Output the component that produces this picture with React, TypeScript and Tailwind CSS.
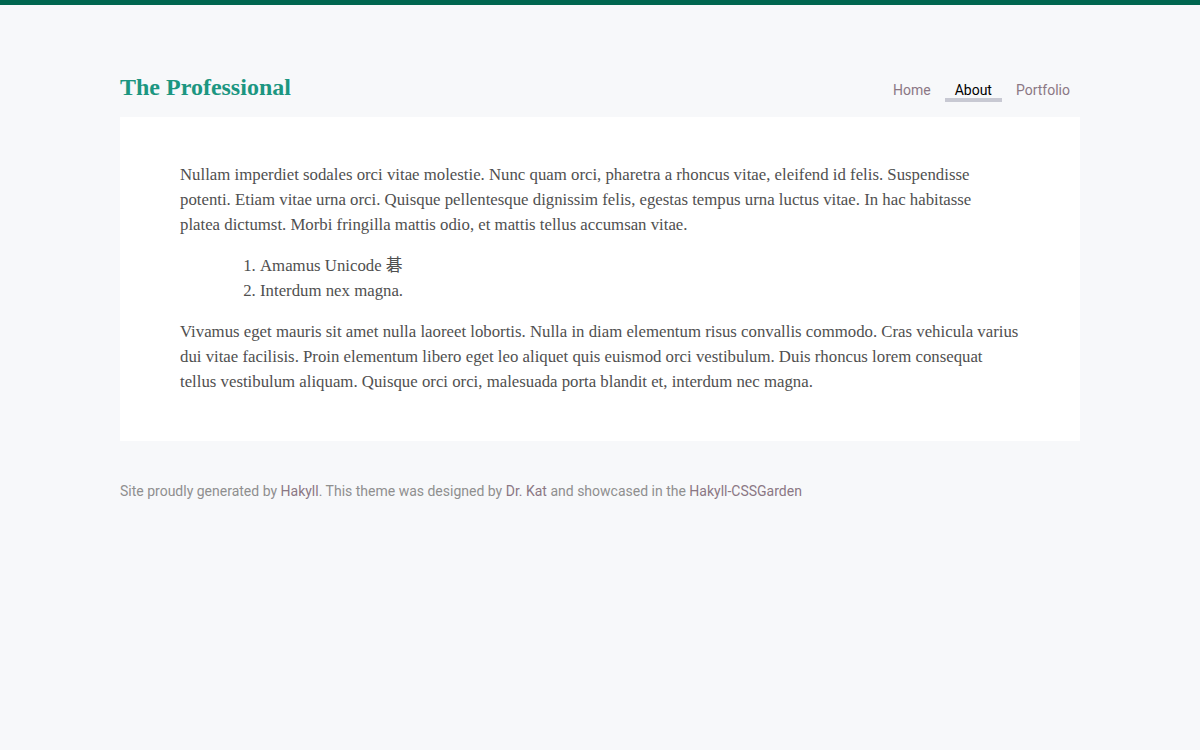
const serif = { fontFamily: '"Liberation Serif", "DejaVu Serif", "Noto Sans CJK SC", serif' };

const intro = [
  'Nullam imperdiet sodales orci vitae molestie. Nunc quam orci, pharetra a rhoncus vitae, eleifend id felis. Suspendisse',
  'potenti. Etiam vitae urna orci. Quisque pellentesque dignissim felis, egestas tempus urna luctus vitae. In hac habitasse',
  'platea dictumst. Morbi fringilla mattis odio, et mattis tellus accumsan vitae.',
];

const outro = [
  'Vivamus eget mauris sit amet nulla laoreet lobortis. Nulla in diam elementum risus convallis commodo. Cras vehicula varius',
  'dui vitae facilisis. Proin elementum libero eget leo aliquet quis euismod orci vestibulum. Duis rhoncus lorem consequat',
  'tellus vestibulum aliquam. Quisque orci orci, malesuada porta blandit et, interdum nec magna.',
];

const Para = ({ lines }: { lines: string[] }) => (
  <p>
    {lines.map((l) => (
      <span key={l} className="block whitespace-nowrap">
        {l}
      </span>
    ))}
  </p>
);

export default function App() {
  return (
    <div className="min-h-[750px] bg-[#f7f8fa] border-t-[5px] border-[#00664f]">
      <div className="w-[960px] mx-auto">
        <header className="flex items-end justify-between pt-[67px] pb-[15px]">
          <h1 className="text-[24px] leading-[30px] font-bold text-[#1c9681]" style={serif}>
            The Professional
          </h1>
          <nav className="flex gap-[4px] text-[14px] leading-[16px] font-['Roboto',sans-serif]">
            <a className="px-[10px] pb-[4px] text-[#8b7784]">Home</a>
            <a className="px-[10px] text-black border-b-[4px] border-[#c8c9d3]">About</a>
            <a className="px-[10px] pb-[4px] text-[#8b7784]">Portfolio</a>
          </nav>
        </header>
        <main className="bg-white px-[60px] pt-[45px] pb-[47px] text-[16.8px] leading-[25px] text-[#505050]" style={serif}>
          <Para lines={intro} />
          <ol className="list-decimal pl-[80px] my-[16px]">
            <li>Amamus Unicode 碁</li>
            <li>Interdum nex magna.</li>
          </ol>
          <Para lines={outro} />
        </main>
        <footer className="pt-[40px] text-[14px] leading-[20px] text-[#8f8f8f] font-['Roboto',sans-serif]">
          Site proudly generated by <a className="text-[#8b7784]">Hakyll</a>. This theme was designed by{' '}
          <a className="text-[#8b7784]">Dr. Kat</a> and showcased in the{' '}
          <a className="text-[#8b7784]">Hakyll-CSSGarden</a>
        </footer>
      </div>
    </div>
  );
}
